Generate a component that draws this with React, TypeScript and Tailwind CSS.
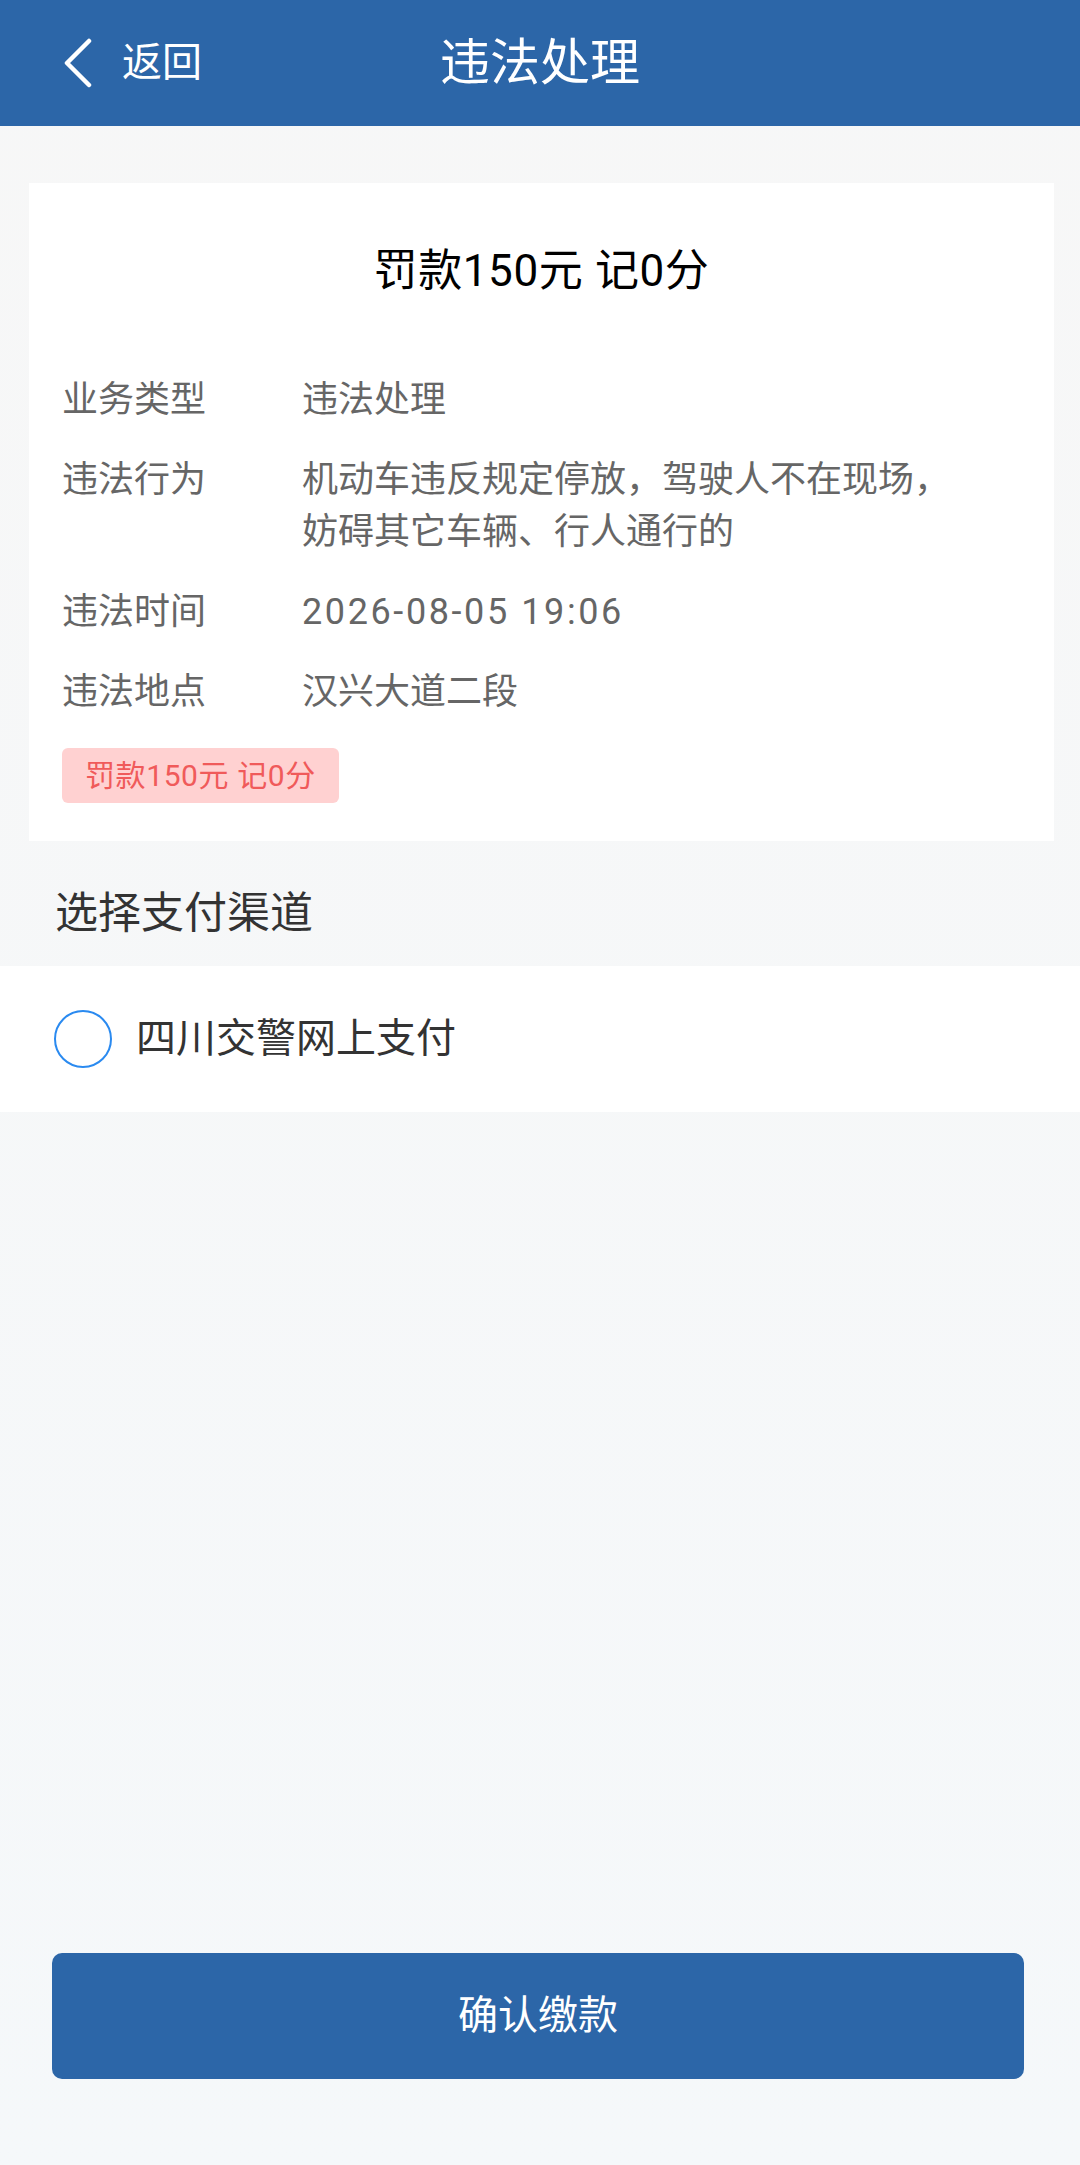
import React from 'react';

const rows: { label: string; value: React.ReactNode }[] = [
  { label: '业务类型', value: '违法处理' },
  {
    label: '违法行为',
    value: (
      <>
        机动车违反规定停放，驾驶人不在现场，
        <br />
        妨碍其它车辆、行人通行的
      </>
    ),
  },
  { label: '违法时间', value: <span className="tracking-[2.6px]">2026-08-05 19:06</span> },
  { label: '违法地点', value: '汉兴大道二段' },
];

export default function App() {
  return (
    <div
      className="flex min-h-[2165px] w-[1080px] flex-col bg-gradient-to-b from-[#f7f7f7] to-[#f5f8fa]"
      style={{ fontFamily: 'Roboto, "Noto Sans CJK SC", "Noto Sans", sans-serif' }}
    >
      {/* 顶部导航 */}
      <header className="relative flex h-[126px] items-center bg-[#2c66a8] text-white">
        <button className="flex items-center pl-[63px]">
          <svg width="30" height="50" viewBox="0 0 30 50" fill="none">
            <polyline
              points="26,3 4,25 26,47"
              stroke="white"
              strokeWidth="4.5"
              strokeLinecap="round"
              strokeLinejoin="round"
            />
          </svg>
          <span className="ml-[29px] text-[40px] leading-none">返回</span>
        </button>
        <h1 className="absolute left-1/2 -translate-x-1/2 text-[50px] leading-none">违法处理</h1>
      </header>

      {/* 罚款信息卡片 */}
      <div className="ml-[29px] mr-[26px] mt-[57px] bg-white pb-[38px] pl-[33px] pr-[33px] pt-[58px]">
        <div className="text-center text-[44px] leading-[60px] tracking-[0.6px] text-black">罚款150元 记0分</div>
        <div className="mt-[73px] flex flex-col gap-[28px]">
          {rows.map((row) => (
            <div key={row.label} className="flex text-[36px] leading-[52px] text-[#666666]">
              <div className="w-[240px] shrink-0">{row.label}</div>
              <div>{row.value}</div>
            </div>
          ))}
        </div>
        <div className="mt-[30px] inline-flex h-[55px] items-center rounded-[6px] bg-[#ffd1d1] px-[23px] text-[30px] leading-none tracking-[0.6px] text-[#f05a5a]">
          罚款150元 记0分
        </div>
      </div>

      {/* 支付渠道 */}
      <div className="pb-[25px] pl-[55px] pt-[44px] text-[43px] leading-[56px] text-[#333333]">选择支付渠道</div>
      <div className="flex h-[146px] items-center bg-white pl-[54px]">
        <span className="h-[58px] w-[58px] rounded-full border-[2.5px] border-[#2a8af0]" />
        <span className="ml-[24px] text-[40px] leading-none text-[#333333]">四川交警网上支付</span>
      </div>

      <div className="flex-1" />

      <button className="mb-[86px] ml-[52px] flex h-[126px] w-[972px] items-center justify-center rounded-[10px] bg-[#2c66a8] text-[40px] text-white">
        确认缴款
      </button>
    </div>
  );
}
